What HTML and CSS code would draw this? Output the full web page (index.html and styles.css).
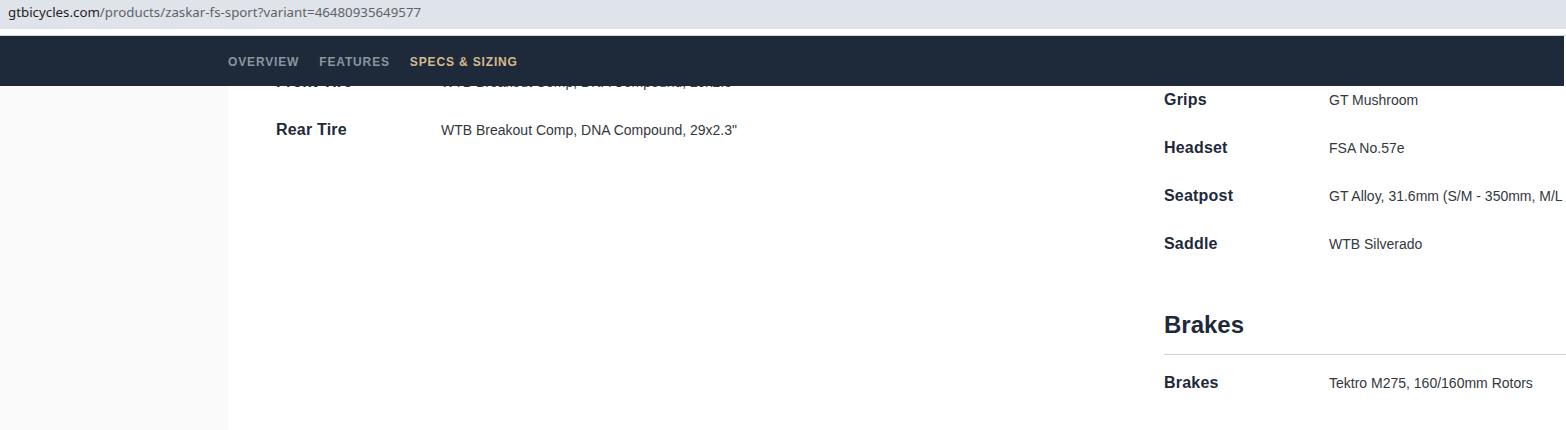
FILE: index.html
```html
<!DOCTYPE html>
<html lang="en">
<head>
<meta charset="utf-8">
<title>Zaskar FS Sport - Specs</title>
<link rel="stylesheet" href="styles.css">
</head>
<body>
<div class="addressbar">
  <span class="host">gtbicycles.com</span><span class="path">/products/zaskar-fs-sport?variant=46480935649577</span>
</div>
<div class="chrome-gap"></div>
<div class="page">
  <nav class="subnav">
    <a class="subnav-link">OVERVIEW</a>
    <a class="subnav-link">FEATURES</a>
    <a class="subnav-link active">SPECS &amp; SIZING</a>
  </nav>
  <aside class="sidebar"></aside>
  <main class="specs">
    <section class="col col-left">
      <div class="row"><div class="label">Front Tire</div><div class="value">WTB Breakout Comp, DNA Compound, 29x2.5"</div></div>
      <div class="row"><div class="label">Rear Tire</div><div class="value">WTB Breakout Comp, DNA Compound, 29x2.3"</div></div>
    </section>
    <section class="col col-right">
      <div class="row"><div class="label">Grips</div><div class="value">GT Mushroom</div></div>
      <div class="row"><div class="label">Headset</div><div class="value">FSA No.57e</div></div>
      <div class="row"><div class="label">Seatpost</div><div class="value">GT Alloy, 31.6mm (S/M - 350mm, M/L - 400mm, L/XL - 400mm)</div></div>
      <div class="row"><div class="label">Saddle</div><div class="value">WTB Silverado</div></div>
      <h2 class="group-title">Brakes</h2>
      <div class="group-rows">
        <div class="row"><div class="label">Brakes</div><div class="value">Tektro M275, 160/160mm Rotors</div></div>
      </div>
    </section>
  </main>
</div>
</body>
</html>
```

FILE: styles.css
```css
* { box-sizing: border-box; }
html, body { margin: 0; padding: 0; }
body {
  width: 1566px;
  height: 430px;
  overflow: hidden;
  background: #ffffff;
  font-family: "Liberation Sans", Arial, sans-serif;
  color: #1e2a3a;
}
.addressbar {
  height: 29px;
  background: #dfe3ea;
  padding-left: 8px;
  font-family: "Noto Sans", "Open Sans", sans-serif;
  font-size: 13.3px;
  line-height: 24px;
  white-space: nowrap;
}
.host { color: #1f1f1f; }
.path { color: #5f6368; }
.chrome-gap {
  height: 7px;
  background: #ffffff;
  border-bottom: 1px solid #d6d6d6;
}
.page {
  position: relative;
  display: flex;
  height: 394px;
}
.subnav {
  position: absolute;
  top: 0;
  left: 0;
  right: 2px;
  height: 50px;
  background: #1e2a3a;
  display: flex;
  align-items: center;
  gap: 20px;
  padding-left: 228px;
  z-index: 2;
}
.subnav-link {
  font-size: 12px;
  font-weight: 700;
  letter-spacing: 0.85px;
  color: #8a95a0;
  line-height: 16px;
  padding-top: 1px;
}
.subnav-link.active { color: #d6ba8e; }
.sidebar {
  width: 228px;
  flex: 0 0 228px;
  background: #fafafa;
}
.specs {
  flex: 0 0 auto;
  display: grid;
  grid-template-columns: 840px 840px;
  column-gap: 48px;
  padding-left: 48px;
  align-items: start;
}
.col-left { padding-top: 22px; }
.col-right { padding-top: 40px; }
.row {
  display: flex;
  align-items: center;
  height: 48px;
}
.label {
  width: 165px;
  flex: 0 0 165px;
  font-size: 16px;
  font-weight: 700;
  letter-spacing: 0.2px;
  color: #1e2a3a;
}
.value {
  font-size: 14px;
  color: #333840;
  white-space: nowrap;
}
.group-title {
  margin: 41px 0 0;
  font-size: 24px;
  line-height: 32px;
  font-weight: 700;
  color: #1e2a3a;
  padding-bottom: 13px;
  border-bottom: 1px solid #d0d1d6;
}
.group-rows { padding-top: 4px; }
```
